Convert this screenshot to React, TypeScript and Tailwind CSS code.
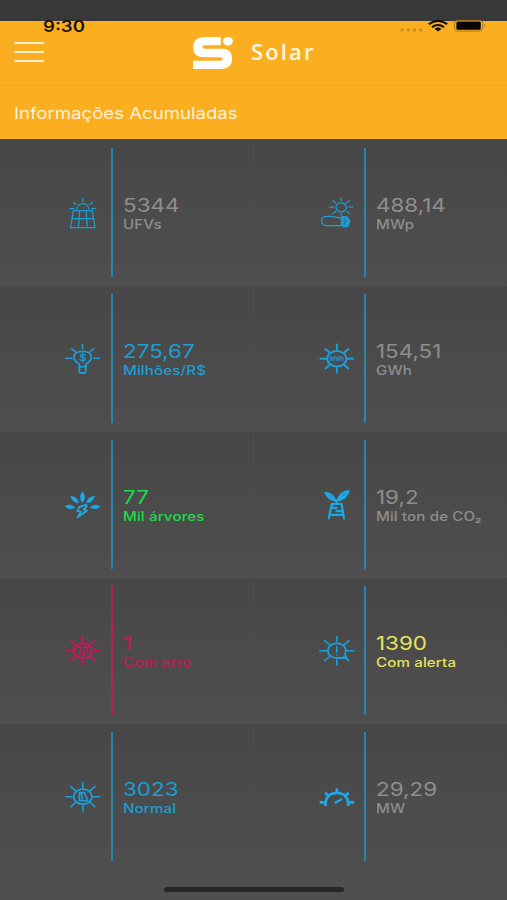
import React from 'react';

const BLUE = '#1b9fd8';
const RED = '#c8175a';

type IconProps = { color?: string; children: React.ReactNode };

const Icon: React.FC<IconProps> = ({ color = BLUE, children }) => (
  <svg
    width="40"
    height="32"
    viewBox="0 0 40 32"
    fill="none"
    stroke={color}
    strokeWidth="1.6"
    strokeLinecap="round"
    strokeLinejoin="round"
  >
    {children}
  </svg>
);

// Eight rays shared by the round sun icons
const Rays: React.FC = () => (
  <path d="M19.8 1.5V7M19.8 24.5V30M2.8 15.7H10M29.6 15.7H36.8M7.6 5.6L12.6 9.9M32 5.6L27 9.9M7.6 25.8L12.6 21.5M32 25.8L27 21.5" />
);

const PanelIcon = () => (
  <Icon>
    <g strokeWidth="1.2">
      <path d="M10.4 13.6H29.4L32 30.6H7.4ZM8.9 21.6H30.8M16.6 13.6L15.5 30.6M23.2 13.6L24.2 30.6" />
      <path d="M14 11.8a5.8 5.2 0 0 1 11.6 0M19.8 1.6V4.6M7.2 11.7H11M28.6 11.7H32.6M10.4 5.4L13 7.4M29.4 5.4L26.8 7.4" />
    </g>
  </Icon>
);

const PowerIcon = () => (
  <Icon>
    <g strokeWidth="1.3">
      <ellipse cx="24.2" cy="10.2" rx="5.2" ry="4.6" />
      <path d="M24.2 1V3.6M24.2 16.8V18.4M12.8 10.2H16.4M32 10.2H35.6M16 3.8L18.6 5.8M32.4 3.8L29.8 5.8M16 16.6L18.6 14.6M32.4 16.6L29.8 14.6" />
      <path d="M24 20.8C20 21.2 17.5 19.4 14 19.4H9.4C3 19.6 3 28.4 9.4 28.6H25" />
    </g>
    <path d="M24.6 19.5H30.2L33 23.8L31.2 29.4L26 30L24.2 27.8Z" fill={BLUE} strokeWidth="0.8" />
    <path d="M27.2 21.4V27.6M29.4 23.2L28.2 26.4" stroke="#48565d" strokeWidth="0.7" />
  </Icon>
);

const MoneyIcon = () => (
  <Icon>
    <path
      d="M16.2 24V20.9C13.2 19.1 10.8 17 10.8 14C10.8 10.4 14.6 8.4 19.6 8.4S28.4 10.4 28.4 14C28.4 17 26 19.1 23 20.9V24M16 23.6H23.2M16.4 24.4V28.6Q16.4 30 17.8 30H21.4Q22.8 30 22.8 28.6V24.4"
      strokeWidth="1.8"
    />
    <path d="M19.6 1.6V5.8M3 15.2H8.6M30.8 15.2H36.4M8.6 5.8L12.4 9M30.6 5.8L26.8 9" />
    <path d="M22.2 12.2C21.2 10.8 17.2 10.9 17.2 12.8C17.2 14.9 22.3 13.7 22.3 15.9C22.3 17.9 18 18 16.9 16.4M19.7 10.2V18.8" strokeWidth="1.2" />
  </Icon>
);

const EnergyIcon = () => (
  <Icon>
    <g strokeWidth="2">
      <ellipse cx="19.9" cy="15.7" rx="9.6" ry="7.8" />
      <path d="M19.9 1.6V6.6M19.9 24.8V29.8M3.4 15.7H9M30.8 15.7H36.4M8.4 6L12 9M31.4 6L27.8 9M8.4 25.4L12 22.4M31.4 25.4L27.8 22.4" />
    </g>
    <text
      x="19.9"
      y="17.8"
      textAnchor="middle"
      textLength="14"
      lengthAdjust="spacingAndGlyphs"
      fontSize="6"
      fontWeight="600"
      fill={BLUE}
      stroke="none"
      className="font-['Inter',sans-serif]"
    >
      MWh
    </text>
  </Icon>
);

const TreesIcon = () => (
  <Icon>
    <g fill="#1ba9ea" stroke="#1ba9ea" strokeWidth="0.4">
      <path d="M19.5 2.8C22.4 6 22.4 10.4 19.5 13.6C16.6 10.4 16.6 6 19.5 2.8Z" />
      <path d="M7.8 7.4C11.6 7.2 14.6 9.4 15.8 13.8C11.8 13.7 8.8 11.4 7.8 7.4Z" />
      <path d="M31.4 7.4C27.6 7.2 24.6 9.4 23.4 13.8C27.4 13.7 30.4 11.4 31.4 7.4Z" />
      <path d="M2.2 17.4C5 15.2 9 15.4 12 18.6C8.4 20.6 4.6 20.2 2.2 17.4Z" />
      <path d="M37 17.4C34.2 15.2 30.2 15.4 27.2 18.6C30.8 20.6 34.6 20.2 37 17.4Z" />
    </g>
    <path d="M22.8 15.6L16.2 18.2L14.4 22.2L18 22.8L14.4 28.6L24 21.6L20.4 20.4L24 17.2Z" stroke="#1ba9ea" strokeWidth="1.8" />
  </Icon>
);

const CarbonIcon = () => (
  <Icon>
    <g fill="#1ba9ea" stroke="none">
      <path d="M7.2 3C13.4 2.8 17.6 6 19.8 12.8C13.6 12.2 9.4 9 7.2 3Z" />
      <path d="M32.8 1.4C26 1 21 5 19.2 12.8C26 12 30.8 8.4 32.8 1.4Z" />
    </g>
    <path d="M12.2 6L14.6 8M28 5L25 7.6" stroke="#3c7896" strokeWidth=".7" />
    <g stroke="#1ba9ea" strokeWidth="2.2">
      <path d="M19.5 11.6V14.8M14.8 15H24.6M14.8 15L11.8 29.4M24.6 15L27 29.4M15.4 18.8H19.6M19.4 22.2H24.6M14.6 25.8H25" />
    </g>
  </Icon>
);

const ErrorIcon = () => (
  <Icon color={RED}>
    <Rays />
    <ellipse cx="19.8" cy="15.7" rx="9" ry="7.4" strokeWidth="2" />
    <path d="M14.6 12.6L18.4 12L17.2 15.6L16.6 19.8M21 12L25.2 12.4L23.6 16.6L19.6 20.4L20.8 16.2Z" strokeWidth="1.5" />
  </Icon>
);

const AlertIcon = () => (
  <Icon>
    <Rays />
    <path d="M28 19C30.6 13.4 26.4 8.4 19.8 8.4C14.4 8.4 10.8 11.6 10.8 15.7S14.6 23 19.8 23H29.6Z" strokeWidth="1.8" />
    <path d="M19.8 11.6V17.2M19.8 19.8V20" strokeWidth="1.5" />
  </Icon>
);

const NormalIcon = () => (
  <Icon>
    <Rays />
    <ellipse cx="19.8" cy="15.7" rx="9.1" ry="7.5" strokeWidth="1.8" />
    <path d="M16.4 11.6V19.8H24.8L21.4 11.6ZM18.2 12L19.6 19.4" strokeWidth="1.6" />
  </Icon>
);

const GaugeIcon = () => (
  <Icon>
    <g stroke="#1ba9ea" strokeWidth="2.8" strokeLinecap="butt">
      <path d="M8.6 25V21.4C9.4 15.4 14 11.8 19.9 11.8S30.4 15.4 31.2 21.4V25" />
      <path d="M2.6 21.4H9M30.8 21.4H37.4M19.9 7.4V12M8 11.8L12.6 15.4M31.8 11.8L27.2 15.4" />
      <path d="M18.6 21.6L24 18.4" strokeLinecap="round" strokeWidth="2.3" />
    </g>
  </Icon>
);

type Stat = {
  value: string;
  label: string;
  icon: React.FC;
  text: string;
  bar: string;
};

const stats: Stat[] = [
  { value: '5344', label: 'UFVs', icon: PanelIcon, text: 'text-[#8e8e8e]', bar: 'bg-[#2787ae]' },
  { value: '488,14', label: 'MWp', icon: PowerIcon, text: 'text-[#8e8e8e]', bar: 'bg-[#2787ae]' },
  { value: '275,67', label: 'Milhões/R$', icon: MoneyIcon, text: 'text-[#1c9dd4]', bar: 'bg-[#2787ae]' },
  { value: '154,51', label: 'GWh', icon: EnergyIcon, text: 'text-[#8e8e8e]', bar: 'bg-[#2787ae]' },
  { value: '77', label: 'Mil árvores', icon: TreesIcon, text: 'text-[#19dc4a]', bar: 'bg-[#2787ae]' },
  { value: '19,2', label: 'Mil ton de CO₂', icon: CarbonIcon, text: 'text-[#8e8e8e]', bar: 'bg-[#2787ae]' },
  { value: '1', label: 'Com erro', icon: ErrorIcon, text: 'text-[#c8175a]', bar: 'bg-[#b81f58]' },
  { value: '1390', label: 'Com alerta', icon: AlertIcon, text: 'text-[#e6e25c]', bar: 'bg-[#2787ae]' },
  { value: '3023', label: 'Normal', icon: NormalIcon, text: 'text-[#1c9dd4]', bar: 'bg-[#2787ae]' },
  { value: '29,29', label: 'MW', icon: GaugeIcon, text: 'text-[#8e8e8e]', bar: 'bg-[#2787ae]' },
];

const StatCell: React.FC<{ stat: Stat }> = ({ stat }) => (
  <div className="flex pt-[8px] border-r border-[#4e4e4e] even:border-transparent">
    <div className="w-[110.5px] h-[130px] shrink-0 flex justify-end items-center pr-[7.5px]">
      <stat.icon />
    </div>
    <div className={`w-[2px] h-[129px] shrink-0 ${stat.bar}`} />
    <div className={`pl-[10px] pt-[47px] whitespace-nowrap ${stat.text}`}>
      <div className="text-[19px] leading-[22px] origin-left scale-x-[1.18]">{stat.value}</div>
      <div className="text-[12.5px] leading-4 font-medium origin-left scale-x-[1.21] tracking-[0.1px]">{stat.label}</div>
    </div>
  </div>
);

const StatusBar = () => (
  <div className="h-[12px] flex justify-between pl-[43px] pr-[20px]">
    <span className="text-[15.5px] leading-[11px] font-semibold text-[#1d1608] origin-left scale-x-[1.2]">9:30</span>
    <svg width="88" height="14" viewBox="0 0 88 14" className="-mt-[2px]">
      <g fill="#c98f24">
        <circle cx="3" cy="11" r="1.8" />
        <circle cx="9.2" cy="11" r="1.8" />
        <circle cx="15.4" cy="11" r="1.8" />
        <circle cx="21.6" cy="11" r="1.8" />
      </g>
      <g fill="none" stroke="#120d04" strokeWidth="2.1">
        <path d="M29.8 5.2Q39 -1.4 48.2 5.2" />
        <path d="M33 8.2Q39 3.8 45 8.2" />
      </g>
      <path d="M35.6 9.8Q39 7.4 42.4 9.8L39 12.6Z" fill="#120d04" />
      <rect x="55.6" y="1.5" width="28" height="10.6" rx="3" fill="none" stroke="#ab7a20" />
      <rect x="57.4" y="2.6" width="24.4" height="8.2" rx="1.6" fill="#080602" />
      <path d="M85 4.8Q87.2 6.6 85 8.6Z" fill="#ab7a20" />
    </svg>
  </div>
);

const Logo = () => (
  <svg width="42" height="34" viewBox="0 0 42 34" fill="#fff">
    <path d="M13 1H28.8V9.2H12.6Q10.4 9.2 10.4 11T12.6 12.8H30Q40.2 12.8 40.2 22.6T29.6 33H1V24.8H28.6Q30.6 24.8 30.6 23T28.6 21.2H12Q1.2 21.2 1.2 11.2T13 1Z" />
    <ellipse cx="36" cy="5.3" rx="4.9" ry="4.2" />
  </svg>
);

const Header = () => (
  <header>
    <div className="h-[21px] bg-[#383839]" />
    <div className="h-[64px] bg-[#fbae20]">
      <StatusBar />
      <div className="flex h-[40px] items-center pl-[14px]">
        <button aria-label="Menu" className="-mt-[2px] flex w-[30px] flex-col gap-[7px]">
          <span className="h-[2px] rounded-full bg-[#fff0cf]" />
          <span className="h-[2px] rounded-full bg-[#fff0cf]" />
          <span className="h-[2px] rounded-full bg-[#fff0cf]" />
        </button>
        <div className="ml-[148px] flex items-center">
          <Logo />
          <span className="ml-[17px] -mt-px font-['Open_Sans',sans-serif] text-[21px] leading-none font-semibold tracking-[2px] text-[#fff6e0] origin-left scale-x-[1.05]">
            Solar
          </span>
        </div>
      </div>
    </div>
    <div className="h-[54px] border-t border-[#eba63a] bg-[#fbae20] pl-[14px] flex items-center">
      <h1 className="text-[16px] leading-none text-[#fff3d6] origin-left scale-x-[1.163] whitespace-nowrap">
        Informações Acumuladas
      </h1>
    </div>
  </header>
);

const App: React.FC = () => (
  <div className="relative h-[900px] w-[507px] overflow-hidden bg-[#4f4f4f] font-['Inter',sans-serif]">
    <Header />
    <main>
      {[0, 2, 4, 6, 8].map((start) => (
        <section
          key={start}
          className="grid h-[146px] grid-cols-2 border-t border-[#515151] bg-linear-to-b from-[#474747] to-[#4f4f4f]"
        >
          {stats.slice(start, start + 2).map((stat) => (
            <StatCell key={stat.label} stat={stat} />
          ))}
        </section>
      ))}
    </main>
    <div className="mx-auto mt-[18px] h-[5px] w-[180px] rounded-full bg-[#272727]" />
  </div>
);

export default App;
